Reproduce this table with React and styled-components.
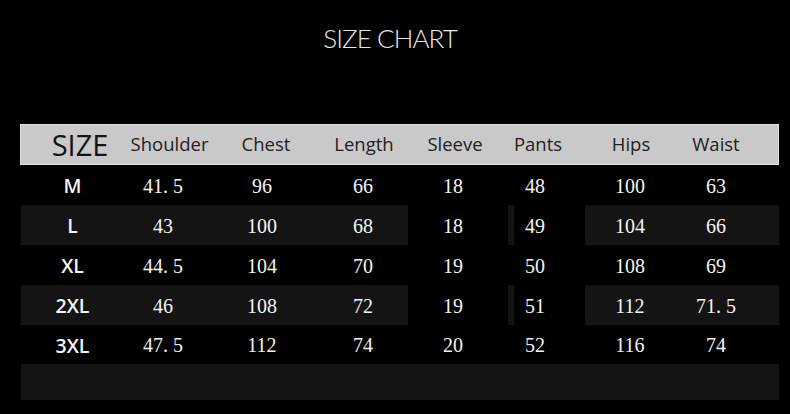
import styled, { createGlobalStyle } from "styled-components";

const GlobalStyle = createGlobalStyle`
  html, body {
    margin: 0;
    padding: 0;
    background: #000;
  }
  body {
    width: 790px;
    height: 414px;
    overflow: hidden;
    font-family: "Open Sans", "Liberation Sans", sans-serif;
  }
`;

const Page = styled.div`
  display: flex;
  flex-direction: column;
  align-items: flex-start;
  width: 790px;
  height: 414px;
  background: #000;
`;

const Title = styled.h1`
  align-self: stretch;
  flex: 0 0 124px;
  margin: 0;
  padding: 25px 10px 0 0;
  box-sizing: border-box;
  text-align: center;
  font-family: Lato, "Open Sans", sans-serif;
  font-weight: 300;
  font-size: 26px;
  line-height: 1;
  letter-spacing: -0.9px;
  color: #e8e8e8;
`;

const Table = styled.div`
  margin-left: 21px;
  width: 758px;
  display: flex;
  flex-direction: column;
`;

const template = "103px 91px 100px 93px 100px 77px 88px 106px";

const HeadRow = styled.div`
  display: grid;
  grid-template-columns: ${template};
  height: 41px;
  box-sizing: border-box;
  background: #c9c9c9;
  border: 1px solid #e2e2e2;
  margin-left: -1px;
  width: 759px;
`;

const HeadCell = styled.div`
  display: flex;
  align-items: center;
  justify-content: center;
  padding-left: ${(p) => Math.max(0, p.$dx * 2)}px;
  padding-right: ${(p) => Math.max(0, -p.$dx * 2)}px;
  padding-bottom: ${(p) => (p.$big ? 2 : 4)}px;
  font-size: ${(p) => (p.$big ? "29px" : "18.5px")};
  color: ${(p) => (p.$big ? "#141414" : "#222")};
  white-space: nowrap;
`;

const Row = styled.div`
  display: grid;
  grid-template-columns: ${template};
  height: ${(p) => p.$h || 40}px;
`;

const toneBg = {
  stripe: "#141414",
  sliver: "linear-gradient(to right, #141414 6px, #000 6px)",
  none: "#000",
};

const Cell = styled.div`
  display: flex;
  align-items: center;
  justify-content: center;
  padding-left: ${(p) => Math.max(0, p.$dx * 2)}px;
  padding-right: ${(p) => Math.max(0, -p.$dx * 2)}px;
  padding-top: 2px;
  background: ${(p) => toneBg[p.$tone]};
  color: #f4f4f4;
  font-family: "Liberation Serif", "Times New Roman", serif;
  font-size: 20px;
  white-space: pre;
`;

const SizeLabel = styled(Cell)`
  font-family: "Open Sans", "Liberation Sans", sans-serif;
  font-weight: 600;
  font-size: 19.5px;
  padding-top: 1px;
`;

const EmptyRow = styled.div`
  height: 36px;
  background: #141414;
`;

const cols = [
  { name: "SIZE", dx: 0, hx: 7.5, big: true },
  { name: "Shoulder", dx: -6.5, hx: 0 },
  { name: "Chest", dx: -3, hx: 1 },
  { name: "Length", dx: 1.5, hx: 2.5 },
  { name: "Sleeve", dx: -5, hx: -3 },
  { name: "Pants", dx: -11.5, hx: -8.5 },
  { name: "Hips", dx: 1, hx: 2 },
  { name: "Waist", dx: -10, hx: -10 },
];

const rows = [
  ["M", "41. 5", "96", "66", "18", "48", "100", "63"],
  ["L", "43", "100", "68", "18", "49", "104", "66"],
  ["XL", "44. 5", "104", "70", "19", "50", "108", "69"],
  ["2XL", "46", "108", "72", "19", "51", "112", "71. 5"],
  ["3XL", "47. 5", "112", "74", "20", "52", "116", "74"],
];

const heights = [40, 40, 40, 40, 39];

function toneFor(striped, i) {
  if (!striped) return "none";
  if (i === 4) return "none";
  if (i === 5) return "sliver";
  return "stripe";
}

export default function App() {
  return (
    <Page>
      <GlobalStyle />
      <Title>SIZE CHART</Title>
      <Table>
        <HeadRow>
          {cols.map((c) => (
            <HeadCell key={c.name} $dx={c.hx} $big={c.big}>
              {c.name}
            </HeadCell>
          ))}
        </HeadRow>
        {rows.map((r, ri) => {
          const striped = ri % 2 === 1;
          return (
            <Row key={r[0]} $h={heights[ri]}>
              {r.map((v, i) =>
                i === 0 ? (
                  <SizeLabel key={i} $dx={cols[i].dx} $tone={toneFor(striped, i)}>
                    {v}
                  </SizeLabel>
                ) : (
                  <Cell key={i} $dx={cols[i].dx} $tone={toneFor(striped, i)}>
                    {v}
                  </Cell>
                )
              )}
            </Row>
          );
        })}
        <EmptyRow />
      </Table>
    </Page>
  );
}
